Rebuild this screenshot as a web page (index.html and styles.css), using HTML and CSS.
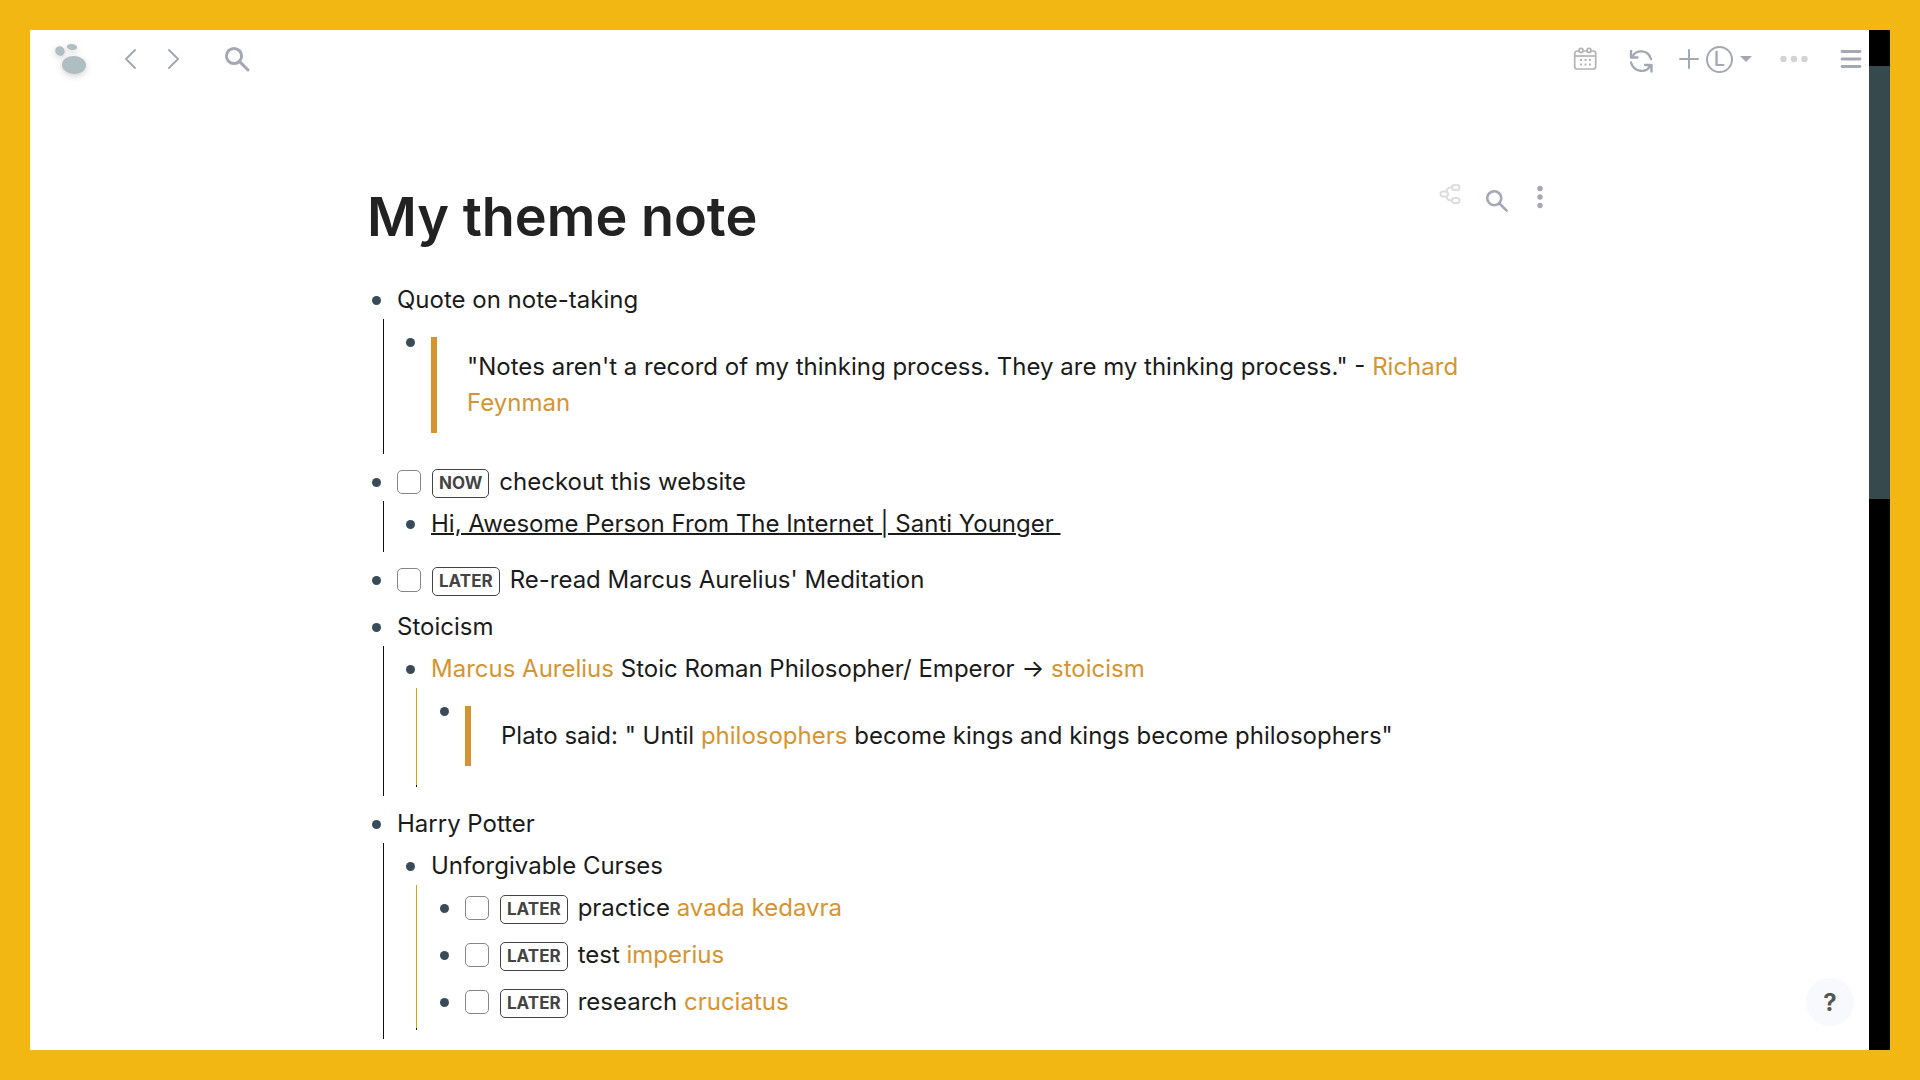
FILE: index.html
```html
<!DOCTYPE html>
<html lang="en">
<head>
<meta charset="utf-8">
<meta name="viewport" content="width=device-width, initial-scale=1">
<title>My theme note</title>
<link rel="stylesheet" href="styles.css">
</head>
<body>
<div class="app">
  <header class="topbar">
    <button class="icon-btn logo" aria-label="Home">
      <svg width="34" height="34" viewBox="0 0 34 34" fill="#afbec3">
        <ellipse cx="7" cy="9" rx="4.6" ry="5" transform="rotate(-38 7 9)"/>
        <ellipse cx="19" cy="5" rx="5.2" ry="3" transform="rotate(8 19 5)"/>
        <ellipse cx="21" cy="23" rx="12" ry="9" transform="rotate(2 21 23)"/>
      </svg>
    </button>
    <nav class="history">
      <button class="icon-btn" aria-label="Back">
        <svg width="24" height="24" viewBox="0 0 24 24" fill="none" stroke="#a3a8b4" stroke-width="2" stroke-linecap="round" stroke-linejoin="round"><path d="M16 3 7 12l9 9"/></svg>
      </button>
      <button class="icon-btn" aria-label="Forward">
        <svg width="24" height="24" viewBox="0 0 24 24" fill="none" stroke="#a3a8b4" stroke-width="2" stroke-linecap="round" stroke-linejoin="round"><path d="m8 3 9 9-9 9"/></svg>
      </button>
    </nav>
    <button class="icon-btn find" aria-label="Search">
      <svg width="26" height="26" viewBox="0 0 26 26" fill="none" stroke="#a3a8b4" stroke-width="3"><circle cx="10" cy="10" r="7.6"/><path d="m15.400 15.400 8.600 8.600" stroke-linecap="round"/></svg>
    </button>
    <div class="tools">
      <button class="icon-btn" aria-label="Journals">
        <svg width="24" height="24" viewBox="0 0 24 24" fill="none" stroke="#b3b3b5" stroke-width="1.700"><rect x="1.700" y="4" width="21" height="18" rx="2.500"/><path d="M2 9h20.500"/><circle cx="8" cy="3.400" r="2" fill="#fff"/><circle cx="16" cy="3.400" r="2" fill="#fff"/><path d="M7 13h2M11.500 13h2M16 13h2M7 17.500h2M11.500 17.500h2M16 17.500h2" stroke-width="1.800"/></svg>
      </button>
      <button class="icon-btn sync" aria-label="Sync">
        <svg width="26" height="26" viewBox="0 0 26 26" fill="none" stroke="#a3a8b4" stroke-width="2.400" stroke-linecap="round" stroke-linejoin="round"><path d="M3 3v6.500h6.500M4.500 8.500C8 1.500 20 1 23 11"/><path d="M23.500 23.500V17H17M22 18C18.500 25 6 25 3 14.500"/></svg>
      </button>
      <div class="graph">
        <button class="icon-btn" aria-label="Add graph">
          <svg width="20" height="20" viewBox="0 0 20 20" stroke="#a3a8b4" stroke-width="2" stroke-linecap="round"><path d="M10 1v18M1 10h18"/></svg>
        </button>
        <button class="icon-btn graph-name" aria-label="Switch graph">
          <span class="avatar">L</span>
          <svg width="12" height="6" viewBox="0 0 12 6" fill="#a3a8b4"><path d="M0 0h12L6 6z"/></svg>
        </button>
      </div>
      <button class="icon-btn more" aria-label="More">
        <svg width="28" height="8" viewBox="0 0 28 8" fill="#d2d3d6"><circle cx="3.500" cy="4" r="3.200"/><circle cx="14" cy="4" r="3.200"/><circle cx="24.500" cy="4" r="3.200"/></svg>
      </button>
      <button class="icon-btn" aria-label="Toggle sidebar">
        <svg width="22" height="20" viewBox="0 0 22 20" stroke="#a3a8b4" stroke-width="2.800" stroke-linecap="round"><path d="M2 2.500h18M2 10h18M2 17.500h18"/></svg>
      </button>
    </div>
  </header>

  <main class="page">
    <div class="page-head">
      <h1>My theme note</h1>
      <div class="page-tools">
        <button class="icon-btn mind" aria-label="Mind map">
          <svg width="22" height="22" viewBox="0 0 22 22" fill="none" stroke="#dcdddf" stroke-width="2"><rect x="13" y="2" width="7.500" height="5" rx="2.500"/><rect x="1.500" y="8.500" width="7.500" height="5" rx="2.500"/><rect x="13" y="15" width="7.500" height="5" rx="2.500"/><path d="M12.500 4.500C8 4.500 8.500 6 7.500 8M12.500 17.500C8 17.500 8.500 16 7.500 14"/></svg>
        </button>
        <button class="icon-btn seek" aria-label="Search in page">
          <svg width="24" height="24" viewBox="0 0 26 26" fill="none" stroke="#a3a8b4" stroke-width="2.800"><circle cx="10" cy="10" r="7.600"/><path d="m15.400 15.400 8 8" stroke-linecap="round"/></svg>
        </button>
        <button class="icon-btn" aria-label="Page menu">
          <svg width="6" height="24" viewBox="0 0 6 24" fill="#a3a8b4"><circle cx="3" cy="3.500" r="2.700"/><circle cx="3" cy="12" r="2.700"/><circle cx="3" cy="20.500" r="2.700"/></svg>
        </button>
      </div>
    </div>

    <ul class="outline">
      <li>
        <div class="row"><span class="text">Quote on note-taking</span></div>
        <ul>
          <li>
            <div class="row"><blockquote>"Notes aren't a record of my thinking process. They are my thinking process." - <a class="ref" href="#">Richard Feynman</a></blockquote></div>
          </li>
        </ul>
      </li>
      <li>
        <div class="row"><input type="checkbox" id="t1"><button class="marker">NOW</button><label class="text" for="t1">checkout this website</label></div>
        <ul>
          <li>
            <div class="row"><a class="text ext" href="#">Hi, Awesome Person From The Internet | Santi Younger </a></div>
          </li>
        </ul>
      </li>
      <li>
        <div class="row"><input type="checkbox" id="t2"><button class="marker">LATER</button><label class="text" for="t2">Re-read Marcus Aurelius' Meditation</label></div>
      </li>
      <li>
        <div class="row"><span class="text">Stoicism</span></div>
        <ul>
          <li>
            <div class="row"><span class="text"><a class="ref" href="#">Marcus Aurelius</a> Stoic Roman Philosopher/ Emperor → <a class="ref" href="#">stoicism</a></span></div>
            <ul>
              <li>
                <div class="row"><blockquote>Plato said: " Until <a class="ref" href="#">philosophers</a> become kings and kings become philosophers"</blockquote></div>
              </li>
            </ul>
          </li>
        </ul>
      </li>
      <li>
        <div class="row"><span class="text">Harry Potter</span></div>
        <ul>
          <li>
            <div class="row"><span class="text">Unforgivable Curses</span></div>
            <ul>
              <li><div class="row"><input type="checkbox" id="t3"><button class="marker">LATER</button><label class="text" for="t3">practice <a class="ref" href="#">avada kedavra</a></label></div></li>
              <li><div class="row"><input type="checkbox" id="t4"><button class="marker">LATER</button><label class="text" for="t4">test <a class="ref" href="#">imperius</a></label></div></li>
              <li><div class="row"><input type="checkbox" id="t5"><button class="marker">LATER</button><label class="text" for="t5">research <a class="ref" href="#">cruciatus</a></label></div></li>
            </ul>
          </li>
        </ul>
      </li>
    </ul>
  </main>
  <button class="help" aria-label="Help">?</button>
</div>
<div class="scrollbar"><div class="thumb"></div></div>
</body>
</html>
```
FILE: styles.css
```css
* {
  box-sizing: border-box;
}

body {
  margin: 0;
  min-height: 100vh;
  padding: 30px;
  display: flex;
  background: #f3b714;
  color: #1b1b1b;
  font: 400 24px/36px Inter, "Liberation Sans", sans-serif;
}

ul {
  list-style: none;
  margin: 0;
  padding: 0;
}

button {
  font-family: inherit;
  margin: 0;
  cursor: pointer;
}

.app {
  position: relative;
  flex: 1;
  min-width: 0;
  background: #fff;
}

.scrollbar {
  flex: 0 0 21px;
  display: flex;
  flex-direction: column;
  padding-top: 36px;
  background: #000;
}

.thumb {
  flex: 0 0 44%;
  background: #364a4d;
}

/* Top bar */
.topbar {
  display: flex;
  align-items: center;
  height: 58px;
  padding: 0 7px 0 23px;
}

.icon-btn {
  display: flex;
  align-items: center;
  padding: 0;
  border: 0;
  background: none;
}

.logo svg {
  filter: drop-shadow(0 2px 3px rgba(0, 0, 0, .18));
  overflow: visible;
}

.history {
  display: flex;
  gap: 18px;
  margin-left: 32px;
}

.find {
  margin-left: 39px;
}

.tools {
  display: flex;
  align-items: center;
  margin-left: auto;
}

.sync {
  margin: 4px 25px 0 31px;
}

.graph,
.graph-name {
  display: flex;
  align-items: center;
  gap: 7px;
}

.avatar {
  width: 27px;
  height: 27px;
  border: 2px solid #a3a8b4;
  border-radius: 50%;
  color: #a3a8b4;
  font: 500 20px/23px Inter, sans-serif;
  text-align: center;
}

.more {
  margin: 0 32px 0 28px;
}

/* Page */
.page {
  max-width: 1199px;
  margin: 0 auto;
  padding: 90px 0 0 17px;
}

.page-head {
  display: flex;
  justify-content: space-between;
  align-items: flex-start;
}

h1 {
  margin: 0;
  color: #222;
  font-size: 54px;
  line-height: 78px;
  font-weight: 600;
}

.page-tools {
  display: flex;
  align-items: center;
  gap: 24px;
  padding: 3px 6px 0 0;
}

.mind {
  margin-bottom: 6px;
}

.seek {
  margin: 8px 4px 0 0;
}

/* Outline */
.outline {
  margin-top: 21px;
}

.outline li {
  padding: 4px 0 5px 30px;
}

.outline ul {
  margin-left: -14px;
  padding: 0 0 4px 17px;
  border-left: 1px solid #111;
}

.outline ul ul {
  margin-left: -15px;
  padding-left: 18px;
  border-image: linear-gradient(#111 1px, #d0a514 1px calc(100% - 3px), #111 calc(100% - 3px)) 1;
}

.row {
  position: relative;
  display: flex;
  align-items: center;
  min-height: 38px;
}

.row::before {
  content: "";
  position: absolute;
  left: -25px;
  top: 15px;
  width: 9px;
  height: 9px;
  border-radius: 50%;
  background: #394b59;
}

.ref {
  color: #d69431;
  text-decoration: none;
}

.ext {
  color: inherit;
  text-decoration: underline;
  text-decoration-thickness: 2px;
  white-space: pre-wrap;
}

blockquote {
  flex: 1;
  margin: 14px 0 12px;
  padding: 12px 30px;
  border-left: 6px solid #d69431;
}

input[type="checkbox"] {
  appearance: none;
  flex: none;
  width: 24px;
  height: 24px;
  margin: 0 11px 0 0;
  border: 1px solid #868686;
  border-radius: 5px;
  background: #fff;
}

.marker {
  flex: none;
  height: 29px;
  margin: 2px 10px 0 0;
  padding: 0 6px;
  border: 1px solid #444;
  border-radius: 5px;
  background: #fff;
  color: #444;
  font-size: 17px;
  line-height: 24px;
  font-weight: 700;
}

.help {
  position: absolute;
  right: 15px;
  bottom: 24px;
  width: 48px;
  height: 48px;
  padding: 0;
  border: 0;
  border-radius: 50%;
  background: #f7f9fc;
  color: #555;
  font-size: 24px;
  font-weight: 700;
}
```
